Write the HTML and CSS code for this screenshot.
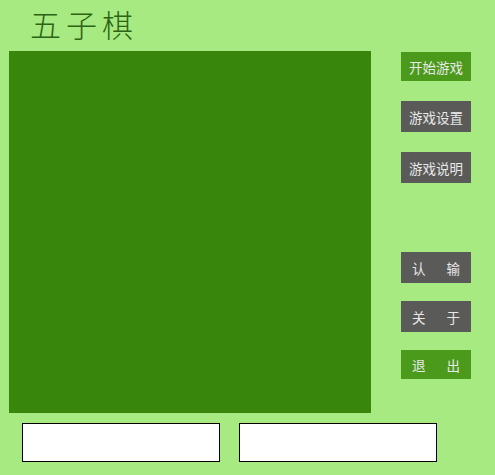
FILE: index.html
```html
<!DOCTYPE html>
<html lang="zh">
<head>
<meta charset="utf-8">
<title>五子棋</title>
<link rel="stylesheet" href="styles.css">
</head>
<body>
<div class="page">
  <header class="header"><h1 class="title">五子棋</h1></header>
  <div class="main">
    <div class="board"></div>
    <div class="menu">
      <div class="btn green b1">开始游戏</div>
      <div class="btn gray b2">游戏设置</div>
      <div class="btn gray b3">游戏说明</div>
      <div class="btn gray spread b4"><span>认</span><span>输</span></div>
      <div class="btn gray spread b5"><span>关</span><span>于</span></div>
      <div class="btn green spread b6"><span>退</span><span>出</span></div>
    </div>
  </div>
  <div class="inputs">
    <div class="box"></div>
    <div class="box"></div>
  </div>
</div>
</body>
</html>
```
FILE: styles.css
```css
html, body {
  margin: 0;
  padding: 0;
  background: #a8ea82;
}
.page {
  width: 495px;
  height: 475px;
  font-family: "Noto Sans CJK SC", "Noto Sans", sans-serif;
}
.header {
  height: 51px;
  display: flex;
  align-items: center;
}
.title {
  margin: 0 0 0 30px;
  font-family: "Noto Sans CJK SC", serif;
  font-weight: 300;
  font-size: 31px;
  letter-spacing: 5px;
  line-height: 1;
  color: #2c6414;
  padding-bottom: 4px;
}
.main {
  display: flex;
  align-items: flex-start;
}
.board {
  width: 362px;
  height: 362px;
  margin-left: 9px;
  background: #38860c;
}
.menu {
  margin-left: 30px;
  display: flex;
  flex-direction: column;
  width: 70px;
}
.btn {
  width: 70px;
  display: flex;
  align-items: center;
  justify-content: center;
  font-size: 13.5px;
  color: #e8e8e8;
  box-sizing: border-box;
  padding-top: 1px;
}
.green {
  background: #4c9a1c;
  height: 29px;
}
.gray {
  background: #5a5a58;
  height: 31px;
}
.spread {
  justify-content: space-between;
  padding: 1px 11px 0;
}
.b1 { margin-top: 1px; }
.b2 { margin-top: 20px; }
.b3 { margin-top: 20px; }
.b4 { margin-top: 69px; }
.b5 { margin-top: 18px; }
.b6 { margin-top: 18px; }
.inputs {
  display: flex;
  gap: 19px;
  margin: 10px 0 0 22px;
}
.box {
  width: 198px;
  height: 39px;
  box-sizing: border-box;
  border: 1px solid #000;
  background: #fff;
}
```
